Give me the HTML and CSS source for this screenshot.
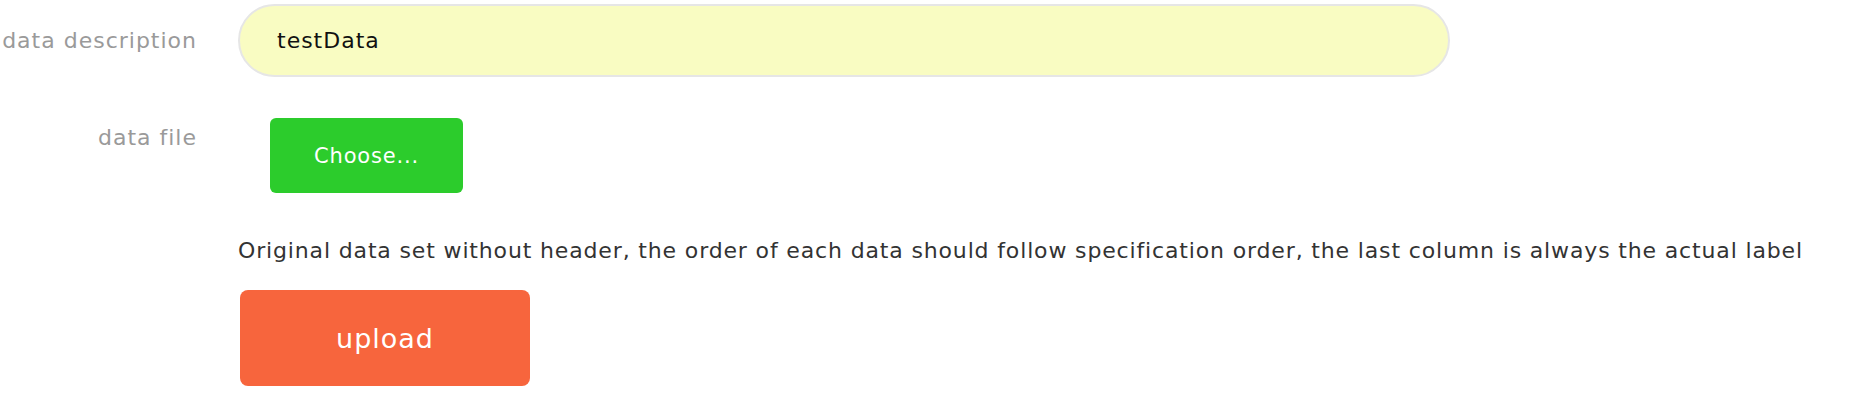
FILE: index.html
```html
<!DOCTYPE html>
<html>
<head>
<meta charset="utf-8">
<link rel="stylesheet" href="styles.css">
</head>
<body>
<form class="form">
  <div class="row row-desc">
    <label class="label">data description</label>
    <input class="text-input" type="text" value="testData">
  </div>
  <div class="row row-file">
    <label class="label label-top">data file</label>
    <div class="file-wrap">
      <span class="choose-btn">Choose...</span>
    </div>
  </div>
  <div class="row">
    <div class="spacer"></div>
    <div class="content">
      <p class="hint">Original data set without header, the order of each data should follow specification order, the last column is always the actual label</p>
      <button class="upload-btn" type="button">upload</button>
    </div>
  </div>
</form>
</body>
</html>
```
FILE: styles.css
```css
html, body {
  margin: 0;
  padding: 0;
  background: #ffffff;
}
body {
  font-family: "DejaVu Sans", "Open Sans", sans-serif;
}
.form {
  display: flex;
  flex-direction: column;
  padding-top: 4px;
}
.row {
  display: flex;
  align-items: center;
  gap: 41px;
}
.label {
  width: 197px;
  flex: none;
  text-align: right;
  color: #9a9a9a;
  font-size: 22px;
  letter-spacing: 1px;
  line-height: 26px;
  white-space: nowrap;
  font-family: "DejaVu Sans", sans-serif;
}
.label-top {
  align-self: flex-start;
  padding-top: 7px;
}
.spacer {
  width: 197px;
  flex: none;
}
.text-input {
  box-sizing: border-box;
  width: 1212px;
  height: 73px;
  border: 2px solid #e6e6e6;
  border-radius: 37px;
  background: #f9fcc2;
  padding: 0 0 0 37px;
  font-family: "DejaVu Sans", sans-serif;
  font-size: 22px;
  letter-spacing: 1px;
  color: #111111;
  outline: none;
  margin: 0;
}
.row-file {
  margin-top: 41px;
}
.file-wrap {
  padding-left: 32px;
}
.choose-btn {
  display: flex;
  align-items: center;
  justify-content: center;
  width: 193px;
  height: 75px;
  border-radius: 6px;
  background: #2ccc2c;
  color: #ffffff;
  font-size: 21px;
  letter-spacing: 0.8px;
}
.content {
  display: flex;
  flex-direction: column;
  align-items: flex-start;
}
.hint {
  margin: 45px 0 0 0;
  font-size: 22px;
  letter-spacing: 0.85px;
  color: #333333;
  line-height: 26px;
  white-space: nowrap;
}
.upload-btn {
  margin: 26px 0 0 2px;
  width: 290px;
  height: 96px;
  border: none;
  border-radius: 8px;
  background: #f7653d;
  color: #ffffff;
  font-family: "DejaVu Sans", sans-serif;
  font-size: 27px;
  letter-spacing: 1px;
  padding: 0;
}
```
